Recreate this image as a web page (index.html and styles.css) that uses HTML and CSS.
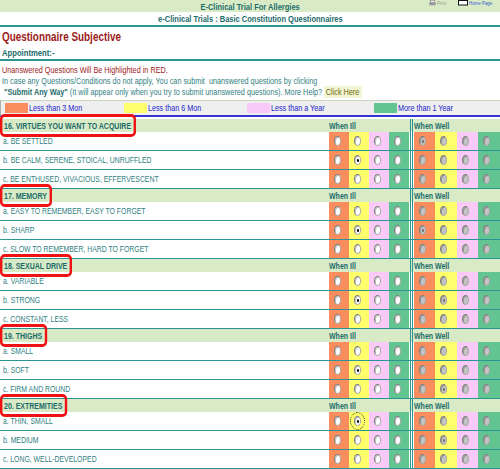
FILE: index.html
```html
<!DOCTYPE html>
<html lang="en">
<head>
<meta charset="utf-8">
<title>Questionnaire Subjective</title>
<link rel="stylesheet" href="styles.css">
</head>
<body>
<div class="topbar">
  <span class="site-title sxc">E-Clinical Trial For Allergies</span>
  <div class="tools">
    <span class="tool tool-print"><svg class="ico" width="7" height="6" viewBox="0 0 7 6"><rect x="1.5" y="0.3" width="4" height="2" fill="#fff" stroke="#777" stroke-width="0.6"/><rect x="0.3" y="2.3" width="6.4" height="3" fill="#999"/></svg><span class="sx">Print</span></span>
    <span class="tool tool-home"><svg class="ico" width="10" height="6" viewBox="0 0 10 6"><rect x="0.5" y="0.5" width="9" height="4.5" fill="#fff" stroke="#111" stroke-width="1"/></svg><span class="sx">Home Page</span></span>
  </div>
</div>
<div class="subtitle"><span class="sxc">e-Clinical Trials : Basic Constitution Questionnaires</span></div>
<div class="page-head">
  <h1><span class="sx">Questionnaire Subjective</span></h1>
  <div class="appt"><span class="sx">Appointment:-</span></div>
</div>
<div class="notes">
  <p class="warn">Unanswered Questions Will Be Highlighted in RED.</p>
  <p>In case any Questions/Conditions do not apply, You can submit&nbsp; unanswered questions by clicking</p>
  <p>&nbsp;<b>"Submit Any Way"</b> (It will appear only when you try to submit unanswered questions). More Help? <a class="help">Click Here</a></p>
</div>
<div class="legend">
  <div class="leg"><span class="sw c1"></span><span class="sx">Less than 3 Mon</span></div>
  <div class="leg"><span class="sw c2"></span><span class="sx">Less than 6 Mon</span></div>
  <div class="leg"><span class="sw c3"></span><span class="sx">Less than a Year</span></div>
  <div class="leg"><span class="sw c4"></span><span class="sx">More than 1 Year</span></div>
</div>
<div id="questions"></div>
<script src="app.js"></script>
</body>
</html>
```
FILE: styles.css
```css
* { box-sizing: border-box; }
html, body { margin: 0; padding: 0; background: #fff; }
body {
  width: 500px;
  overflow: hidden;
  font-family: "Liberation Sans", Arial, sans-serif;
  font-size: 8.6px;
  color: #2f7f7f;
}
/* the reference capture is condensed horizontally: text glyphs are narrowed */
.sx, .sxc {
  display: inline-block;
  white-space: nowrap;
  transform: scaleX(0.8);
  transform-origin: 0 50%;
}
.sxc { transform-origin: 50% 50%; }

.topbar {
  position: relative;
  height: 12px;
  background: #d9ebc6;
  display: flex;
  justify-content: center;
  align-items: center;
}
.site-title, .subtitle {
  font-weight: bold;
  font-size: 9.4px;
  color: #1c6b6b;
}
.tools {
  position: absolute;
  right: 2px;
  top: 0;
  display: flex;
  gap: 10px;
  font-size: 5.5px;
  line-height: 6px;
}
.tool { display: flex; align-items: center; gap: 1px; }
.tool-print { color: #9aa78a; }
.tool-home { color: #3a5ad0; }
.subtitle {
  height: 15px;
  line-height: 13px;
  text-align: center;
  border-bottom: 2px solid #2b9595;
}
.page-head {
  border-bottom: 2px solid #2b9595;
  padding-left: 2px;
}
.page-head h1 {
  margin: 0;
  height: 20px;
  line-height: 20px;
  font-size: 12.4px;
  font-weight: bold;
  color: #9c1a1a;
}
.appt {
  height: 12px;
  line-height: 11px;
  font-size: 9.6px;
  font-weight: bold;
  color: #1c6b6b;
}
.notes { padding: 4px 0 2px 2px; }
.notes p {
  margin: 0;
  line-height: 11px;
  font-size: 9.1px;
  white-space: nowrap;
  transform: scaleX(0.8);
  transform-origin: 0 50%;
}
.notes .warn { color: #9c1a1a; }
.notes b { color: #1c6b6b; }
.help {
  color: #6b6b00;
  background: #f3f3d6;
  padding: 1px 3px 1px 2px;
}
.legend {
  display: grid;
  grid-template-columns: 119px 123px 127px 1fr;
  height: 17px;
  margin-bottom: 2px;
  padding-left: 4px;
  background: #efefef;
  border-top: 1px solid #c9d6c0;
  border-left: 1px solid #b0b0b0;
  border-bottom: 2px solid #3434d0;
  align-items: center;
  color: #2222cc;
  font-size: 9px;
}
.leg { display: flex; align-items: center; }
.sw { flex: none; width: 23px; height: 10px; margin-right: 1px; }
.c1 { background: #f98d5d; }
.c2 { background: #ffff6b; }
.c3 { background: #f9c9f7; }
.c4 { background: #62c591; }

.qhead, .qrow {
  display: grid;
  grid-template-columns: 329px repeat(4, 20px) 5px 21px 22px 21px 22px;
}
.qhead {
  height: 13px;
  background: #d9ebc6;
  align-items: center;
  font-weight: bold;
  font-size: 8.75px;
  color: #1c6b6b;
}
.qtitle { padding-left: 4px; line-height: 10px; }
.mark { position: relative; }
.mark::after {
  content: "";
  position: absolute;
  left: -5px;
  right: -6px;
  top: -7px;
  bottom: -6px;
  border: 3px solid #ee1212;
  border-left-width: 3.75px;
  border-right-width: 3.75px;
  border-radius: 6px / 5px;
}
.grp { grid-column: span 4; line-height: 10px; }
.vdiv {
  align-self: stretch;
  background: linear-gradient(to right, transparent 1px, #2b9595 1px, #2b9595 2px, transparent 2px, transparent 3px, #2b9595 3px, #2b9595 4px, transparent 4px);
}
.qrow {
  height: 19px;
  border-bottom: 1px solid #2b9595;
}
.qrow .vdiv { background-color: #fff; }
.lbl { align-self: center; padding-left: 3px; white-space: nowrap; }
.cell {
  display: flex;
  align-items: center;
  padding-left: 5px;
}
.r {
  position: relative;
  display: block;
  flex: none;
  width: 7px;
  height: 10px;
  border-radius: 50%;
  background: #fff;
  border: 1px solid #7c7c7c;
  border-right-color: #a8a8a8;
  border-bottom-color: #a8a8a8;
  box-shadow: inset 1px 1px 0 #c4c4c4;
}
.r.off {
  background: #c4c4c4;
  border-color: #7e7e7e #a6a6a6 #a6a6a6 #7e7e7e;
  box-shadow: inset 1px 1px 0 #9a9a9a;
}
.r.on::after {
  content: "";
  position: absolute;
  left: 1.5px;
  top: 2.5px;
  width: 2.5px;
  height: 3px;
  border-radius: 50%;
  background: #000;
}
.r.off.on::after { background: #6e6e6e; }
.focus {
  outline: 1px dotted #222;
  outline-offset: 3px;
}
```
FILE: app.js
```js
var data = [
  { t: "16. VIRTUES YOU WANT TO ACQUIRE", items: ["a. BE SETTLED", "b. BE CALM, SERENE, STOICAL, UNRUFFLED", "c. BE ENTHUSED, VIVACIOUS, EFFERVESCENT"], ill: [1, 1], well: [0, 0] },
  { t: "17. MEMORY", items: ["a. EASY TO REMEMBER, EASY TO FORGET", "b. SHARP", "c. SLOW TO REMEMBER, HARD TO FORGET"], ill: [1, 1], well: [1, 0] },
  { t: "18. SEXUAL DRIVE", items: ["a. VARIABLE", "b. STRONG", "c. CONSTANT, LESS"], ill: [1, 1], well: [1, 1] },
  { t: "19. THIGHS", items: ["a. SMALL", "b. SOFT", "c. FIRM AND ROUND"], ill: [1, 1], well: [2, 1] },
  { t: "20. EXTREMITIES", items: ["a. THIN, SMALL", "b. MEDIUM", "c. LONG, WELL-DEVELOPED"], ill: [0, 1], well: [1, 1], focus: true }
];
var root = document.getElementById("questions");
var html = "";
data.forEach(function (q) {
  html += '<div class="q"><div class="qhead"><span class="qtitle"><span class="mark sx">' + q.t + '</span></span><span class="grp"><span class="sx">When Ill</span></span><span class="vdiv"></span><span class="grp"><span class="sx">When Well</span></span></div>';
  q.items.forEach(function (it, i) {
    html += '<div class="qrow"><span class="lbl"><span class="sx">' + it + '</span></span>';
    for (var c = 0; c < 4; c++) {
      var on = (q.ill[0] === i && q.ill[1] === c);
      var f = on && q.focus ? ' focus' : '';
      html += '<span class="cell c' + (c + 1) + '"><i class="r' + (on ? ' on' : '') + f + '"></i></span>';
    }
    html += '<span class="vdiv"></span>';
    for (var d = 0; d < 4; d++) {
      var on2 = (q.well[0] === i && q.well[1] === d);
      html += '<span class="cell c' + (d + 1) + '"><i class="r off' + (on2 ? ' on' : '') + '"></i></span>';
    }
    html += '</div>';
  });
  html += '</div>';
});
root.innerHTML = html;
```
